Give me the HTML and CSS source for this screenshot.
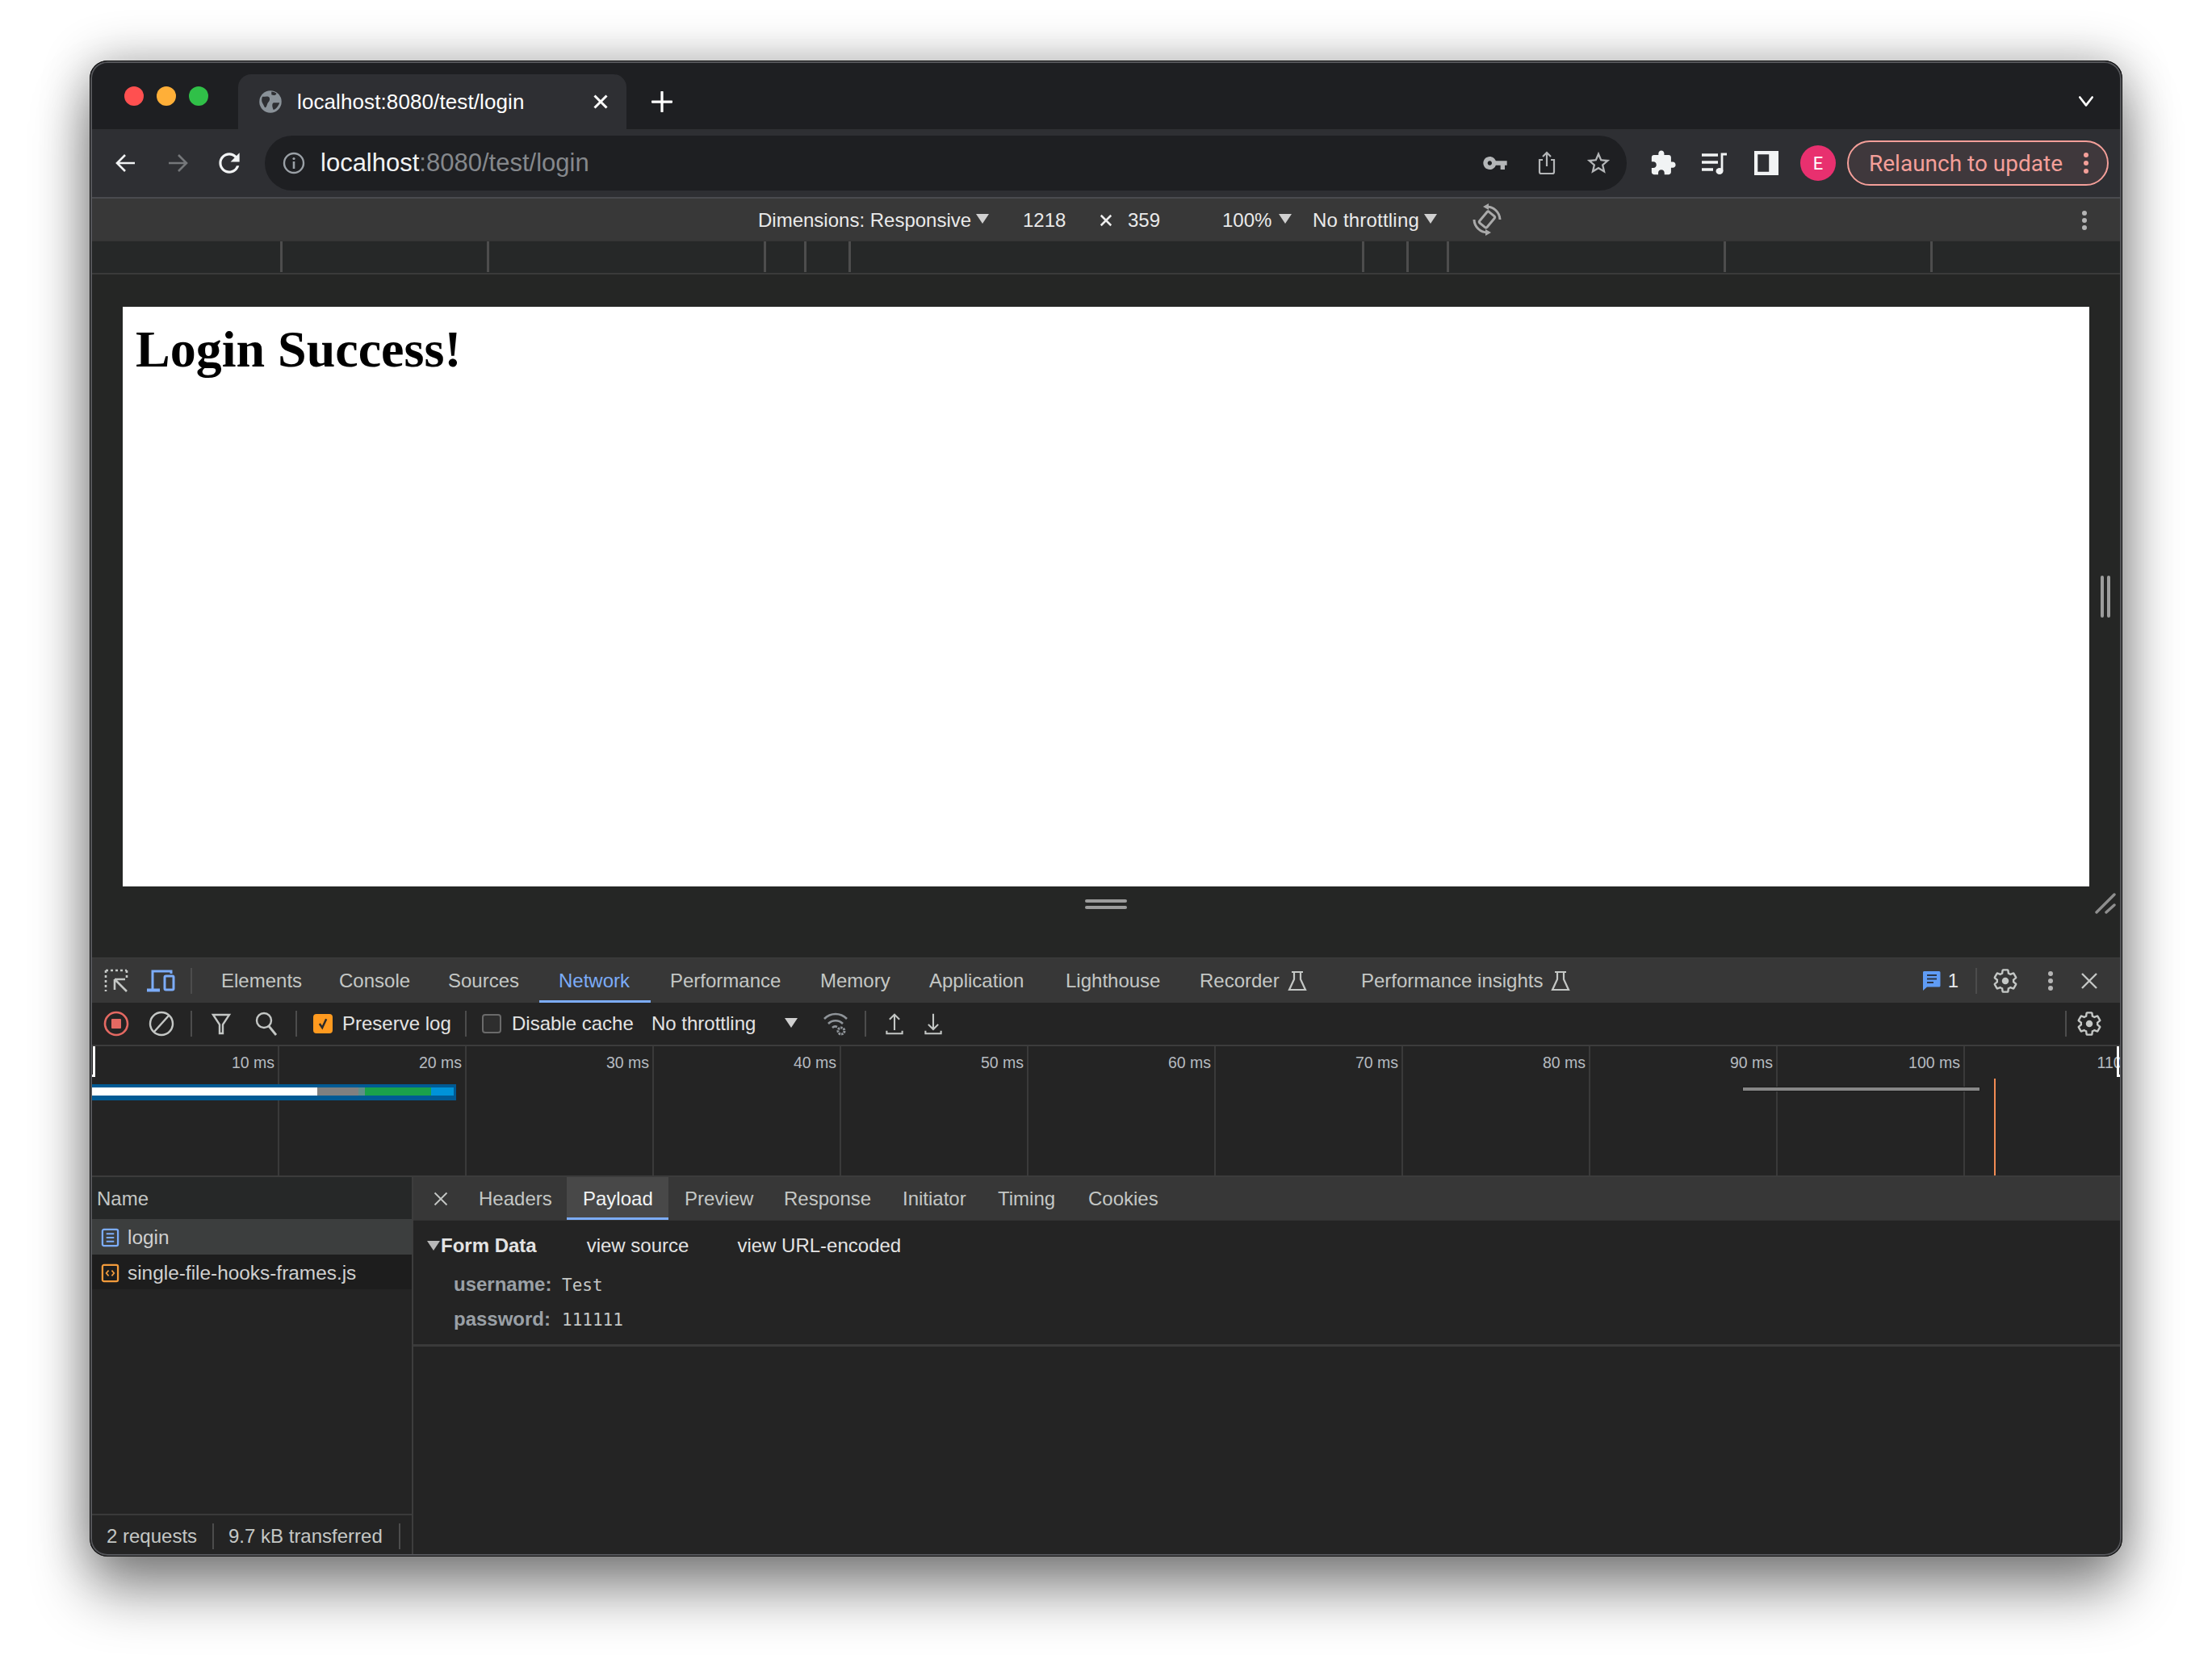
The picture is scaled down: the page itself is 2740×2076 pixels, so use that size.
FILE: index.html
```html
<!DOCTYPE html>
<html lang="en">
<head>
    <meta charset="UTF-8">
    <title>localhost:8080/test/login</title>
    <link rel="stylesheet" href="styles.css">
</head>
<body>
    <div class="window">
        <!-- Tab strip -->
        <div class="titlebar">
            <div class="lights">
                <span class="light red"></span>
                <span class="light yellow"></span>
                <span class="light green"></span>
            </div>
            <div class="tab">
                <svg class="favicon" viewBox="0 0 24 24"><circle cx="12" cy="12" r="11" fill="#8a9299"/><path fill="#2e2f33" d="M4 7c3 0 6-1 7 1 1 3-1 4-2 6-1 3-2 5-3 3-1-3-4-5-2-10zM15 13c2 0 4 0 6 0-1 3-3 6-6 7-1-2-2-6 0-7zM13 2c2 0 4 1 5 2-1 2-3 2-5 1z"/></svg>
                <span class="tab-title">localhost:8080/test/login</span>
                <svg class="tab-close" viewBox="0 0 16 16"><path d="M3 3l10 10M13 3L3 13" stroke="#fff" stroke-width="2" fill="none"/></svg>
            </div>
            <svg class="new-tab" viewBox="0 0 24 24"><path d="M12 1v22M1 12h22" stroke="#fff" stroke-width="3" fill="none" stroke-linecap="round"/></svg>
            <svg class="tab-list" viewBox="0 0 20 14"><path d="M3 2l7 9 7-9" stroke="#fff" stroke-width="2.4" fill="none" stroke-linecap="round" stroke-linejoin="round"/></svg>
        </div>

        <!-- Address bar -->
        <div class="toolbar">
            <span class="btn"><svg class="ic28" viewBox="0 0 28 28"><path d="M25 14H4M13 4L3 14l10 10" stroke="#f1f3f4" stroke-width="2.6" fill="none"/></svg></span>
            <span class="btn"><svg class="ic28" viewBox="0 0 28 28"><path d="M3 14h21M15 4l10 10-10 10" stroke="#75777a" stroke-width="2.6" fill="none"/></svg></span>
            <span class="btn"><svg class="ic38" viewBox="0 0 24 24"><path fill="#f1f3f4" d="M17.65 6.35C16.2 4.9 14.21 4 12 4c-4.42 0-7.99 3.58-7.99 8s3.57 8 7.99 8c3.73 0 6.84-2.55 7.73-6h-2.08c-.82 2.33-3.04 4-5.65 4-3.31 0-6-2.69-6-6s2.69-6 6-6c1.66 0 3.14.69 4.22 1.78L13 11h7V4l-2.35 2.35z"/></svg></span>
            <div class="omnibox">
                <svg class="info" viewBox="0 0 28 28"><circle cx="14" cy="14" r="12" stroke="#9aa0a6" stroke-width="2.4" fill="none"/><path d="M14 12v9" stroke="#9aa0a6" stroke-width="2.6"/><circle cx="14" cy="8.5" r="1.6" fill="#9aa0a6"/></svg>
                <span class="url">localhost<span class="url-rest">:8080/test/login</span></span>
                <span class="btn first"><svg class="ic32" viewBox="0 0 24 24"><path fill="#b4b6b8" d="M12.65 10C11.83 7.67 9.61 6 7 6c-3.31 0-6 2.69-6 6s2.69 6 6 6c2.61 0 4.83-1.67 5.65-4H17v4h4v-4h2v-4H12.65zM7 14c-1.1 0-2-.9-2-2s.9-2 2-2 2 .9 2 2-.9 2-2 2z"/></svg></span>
                <span class="btn"><svg class="ic32" viewBox="0 0 32 32"><path d="M11 12H7v15a2 2 0 0 0 2 2h14a2 2 0 0 0 2-2V12h-4M16 20V3M11 8l5-5 5 5" stroke="#b4b6b8" stroke-width="2.2" fill="none"/></svg></span>
                <span class="btn"><svg class="ic34" viewBox="0 0 24 24"><path fill="#b4b6b8" d="M22 9.24l-7.19-.62L12 2 9.19 8.63 2 9.24l5.46 4.73L5.82 21 12 17.27 18.18 21l-1.63-7.03L22 9.24zM12 15.4l-3.76 2.27 1-4.28-3.32-2.88 4.38-.38L12 6.1l1.71 4.04 4.38.38-3.32 2.88 1 4.28L12 15.4z"/></svg></span>
            </div>
            <span class="btn ext"><svg class="ic34" viewBox="0 0 24 24"><path fill="#f1f3f4" d="M20.5 11H19V7c0-1.1-.9-2-2-2h-4V3.5C13 2.12 11.88 1 10.5 1S8 2.12 8 3.5V5H4c-1.1 0-1.99.9-1.99 2v3.8H3.5c1.49 0 2.7 1.21 2.7 2.7s-1.21 2.7-2.7 2.7H2V20c0 1.1.9 2 2 2h3.8v-1.5c0-1.49 1.21-2.7 2.7-2.7 1.49 0 2.7 1.21 2.7 2.7V22H17c1.1 0 2-.9 2-2v-4h1.5c1.38 0 2.5-1.12 2.5-2.5S21.88 11 20.5 11z"/></svg></span>
            <span class="btn"><svg class="ic34" viewBox="0 0 34 28"><path d="M1 4h20M1 13h20M1 22h14" stroke="#f1f3f4" stroke-width="3.4"/><path d="M26 24V3h6" stroke="#f1f3f4" stroke-width="2.8" fill="none"/><ellipse cx="23" cy="24" rx="4.5" ry="4" fill="#f1f3f4"/></svg></span>
            <span class="btn"><svg class="ic30" viewBox="0 0 28 28"><path d="M0 0h28v28H0zM4 4v20h13V4z" fill="#f1f3f4" fill-rule="evenodd"/></svg></span>
            <span class="btn"><span class="avatar">E</span></span>
            <div class="relaunch">
                <span>Relaunch to update</span>
                <span class="kebab pink"><i></i><i></i><i></i></span>
            </div>
        </div>

        <!-- Device mode bar -->
        <div class="devicebar">
            <span></span>
            <span class="db-item">Dimensions: Responsive<i class="arrow"></i></span>
            <span class="db-item">1218</span>
            <span class="db-item">
                <svg class="db-x" viewBox="0 0 16 16"><path d="M3 3l10 10M13 3L3 13" stroke="#eee" stroke-width="2" fill="none"/></svg>
            </span>
            <span class="db-item">359</span>
            <span class="db-item db-pct">100%<i class="arrow"></i></span>
            <span class="db-item db-throttle">No throttling<i class="arrow"></i></span>
            <svg class="rotate" viewBox="0 0 40 40"><g fill="none" stroke="#aaa" stroke-width="3"><rect x="14" y="11" width="12" height="18" rx="2" transform="rotate(40 20 20)"/><path d="M19 4A16.500 16.500 0 0 1 36 20M21 36A16.500 16.500 0 0 1 4 20"/></g><path d="M15 4l7-4v8zM25 36l-7-4v8z" fill="#aaa"/></svg>
            <span></span>
            <span class="btn narrow"><span class="kebab grey"><i></i><i></i><i></i></span></span>
        </div>

        <!-- Media query ruler -->
        <div class="ruler">
            <i></i><i></i><i></i><i></i><i></i><i></i><i></i><i></i><i></i><i></i>
        </div>

        <!-- Emulated page -->
        <div class="device-area">
            <div class="viewport">
                <h1>Login Success!</h1>
            </div>
            <div class="side-handle"><i></i><i></i></div>
            <div class="bottom-handle"><i></i><i></i></div>
            <svg class="corner-handle" viewBox="0 0 26 26"><path d="M2 24L24 2M14 24l10-9" stroke="#8e8e8e" stroke-width="3.4" stroke-linecap="round"/></svg>
        </div>

        <!-- DevTools main tabs -->
        <div class="dt-tabs">
            <span class="cell"><svg class="ic32" viewBox="0 0 32 32"><path d="M3 3h26M3 3v24M3 3" stroke="#c4c7c5" stroke-width="2.6" stroke-dasharray="3 3" fill="none"/><path d="M29 3v9M3 27v2" stroke="#c4c7c5" stroke-width="2.6" stroke-dasharray="3 3"/><path d="M14 14h13M14 14v13M14 14l15 15" stroke="#c4c7c5" stroke-width="2.6" fill="none"/></svg></span>
            <span class="cell"><svg class="ic36" viewBox="0 0 36 32"><path d="M7 27V4h23v3" stroke="#7cacf8" stroke-width="3" fill="none"/><path d="M0 27.5h16" stroke="#7cacf8" stroke-width="4"/><rect x="22" y="10" width="11" height="17" rx="1.5" stroke="#7cacf8" stroke-width="3" fill="none"/></svg></span>
            <i class="sep"></i>
            <div class="tabs-list">
                <span class="dt-tab">Elements</span>
                <span class="dt-tab">Console</span>
                <span class="dt-tab">Sources</span>
                <span class="dt-tab active">Network</span>
                <span class="dt-tab">Performance</span>
                <span class="dt-tab">Memory</span>
                <span class="dt-tab">Application</span>
                <span class="dt-tab">Lighthouse</span>
                <span class="dt-tab">Recorder
                    <svg class="flask" viewBox="0 0 24 26"><path d="M5 2h14M8 2v9L2 24h20L16 11V2" stroke="#c4c7c5" stroke-width="2.2" fill="none"/></svg>
                </span>
                <span class="dt-tab">Performance insights
                    <svg class="flask" viewBox="0 0 24 26"><path d="M5 2h14M8 2v9L2 24h20L16 11V2" stroke="#c4c7c5" stroke-width="2.2" fill="none"/></svg>
                </span>
            </div>
            <div class="dt-right">
                <svg class="msg" viewBox="0 0 22 26"><path d="M2 1h18a1.500 1.500 0 0 1 1.500 1.500V19a1.500 1.500 0 0 1-1.500 1.500H5L0 25V2.500A1.500 1.500 0 0 1 2 1z" fill="#5f9cf5"/><path d="M5 6h12M5 10.500h12M5 15h8" stroke="#2c3646" stroke-width="2"/></svg>
                <span class="count">1</span>
                <i class="sep gear-sep"></i>
                <span class="cell small gear-cell"><svg class="gear" viewBox="0 0 24 24"><path fill="none" stroke="#c4c7c5" stroke-width="1.700" d="M19.14 12.94c.04-.3.06-.61.06-.94 0-.32-.02-.64-.07-.94l2.03-1.58a.49.49 0 0 0 .12-.61l-1.92-3.32a.488.488 0 0 0-.59-.22l-2.39.96c-.5-.38-1.03-.7-1.62-.94l-.36-2.54a.484.484 0 0 0-.48-.41h-3.84c-.24 0-.43.17-.47.41l-.36 2.54c-.59.24-1.13.57-1.62.94l-2.39-.96c-.22-.08-.47 0-.59.22L2.74 8.87c-.12.21-.08.47.12.61l2.03 1.58c-.05.3-.09.63-.09.94s.02.64.07.94l-2.03 1.58a.49.49 0 0 0-.12.61l1.92 3.32c.12.22.37.29.59.22l2.39-.96c.5.38 1.03.7 1.62.94l.36 2.54c.05.24.24.41.48.41h3.84c.24 0 .44-.17.47-.41l.36-2.54c.59-.24 1.13-.56 1.62-.94l2.39.96c.22.08.47 0 .59-.22l1.92-3.32c.12-.22.07-.47-.12-.61l-2.01-1.58z"/><circle cx="12" cy="12" r="3" fill="#c4c7c5"/></svg></span>
                <span class="cell small"><span class="kebab grey"><i></i><i></i><i></i></span></span>
                <span class="cell small"><svg class="ic24" viewBox="0 0 24 24"><path d="M3 3l18 18M21 3L3 21" stroke="#c4c7c5" stroke-width="2.400" fill="none"/></svg></span>
            </div>
        </div>

        <!-- Network toolbar -->
        <div class="net-toolbar">
            <span class="cell"><svg class="ic32" viewBox="0 0 32 32"><circle cx="16" cy="16" r="14" stroke="#e46962" stroke-width="2.600" fill="none"/><rect x="10" y="10" width="12" height="12" rx="1" fill="#e46962"/></svg></span>
            <span class="cell"><svg class="ic32" viewBox="0 0 32 32"><circle cx="16" cy="16" r="14" stroke="#c4c7c5" stroke-width="2.400" fill="none"/><path d="M7 26L25 6" stroke="#c4c7c5" stroke-width="2.400"/></svg></span>
            <i class="sep"></i>
            <span class="cell with-sep"><svg class="ic28" viewBox="0 0 28 28"><path d="M4 3h20l-8 12v11h-4V15z" stroke="#c4c7c5" stroke-width="2.400" fill="none"/></svg></span>
            <span class="cell"><svg class="ic30" viewBox="0 0 30 30"><circle cx="12" cy="11" r="9" stroke="#c4c7c5" stroke-width="2.400" fill="none"/><path d="M18 18l9 11" stroke="#c4c7c5" stroke-width="2.800"/></svg></span>
            <i class="sep"></i>
            <span class="check on"><svg viewBox="0 0 24 24"><path d="M7 12l4 6 6-13" stroke="#2b2b2b" stroke-width="3" fill="none"/></svg></span>
            <span class="net-label preserve">Preserve log</span>
            <i class="sep after-label"></i>
            <span class="check"></span>
            <span class="net-label disable">Disable cache</span>
            <span class="net-label throttle">No throttling</span>
            <i class="arrow net-arrow"></i>
            <span class="cell wifi"><svg class="ic34" viewBox="0 0 34 34"><g fill="none" stroke="#8f9499" stroke-width="2.600"><path d="M3 11c8-8 20-8 28 0M8 17c5-5 13-5 18 0M13 22c2-2 4-2 6-1"/></g><circle cx="24" cy="26" r="4" fill="none" stroke="#8f9499" stroke-width="3" stroke-dasharray="2.500 1"/></svg></span>
            <i class="sep"></i>
            <span class="cell small up"><svg class="ic28" viewBox="0 0 28 32"><path d="M14 25V3M7 10l7-7 7 7M3 26v4h22v-4" stroke="#c4c7c5" stroke-width="2.400" fill="none"/></svg></span>
            <span class="cell small"><svg class="ic28" viewBox="0 0 28 32"><path d="M14 2v22M7 17l7 7 7-7M3 26v4h22v-4" stroke="#c4c7c5" stroke-width="2.400" fill="none"/></svg></span>
            <i class="sep net-right"></i>
            <span class="cell"><svg class="gear" viewBox="0 0 24 24"><path fill="none" stroke="#c4c7c5" stroke-width="1.700" d="M19.14 12.94c.04-.3.06-.61.06-.94 0-.32-.02-.64-.07-.94l2.03-1.58a.49.49 0 0 0 .12-.61l-1.92-3.32a.488.488 0 0 0-.59-.22l-2.39.96c-.5-.38-1.03-.7-1.62-.94l-.36-2.54a.484.484 0 0 0-.48-.41h-3.84c-.24 0-.43.17-.47.41l-.36 2.54c-.59.24-1.13.57-1.62.94l-2.39-.96c-.22-.08-.47 0-.59.22L2.74 8.87c-.12.21-.08.47.12.61l2.03 1.58c-.05.3-.09.63-.09.94s.02.64.07.94l-2.03 1.58a.49.49 0 0 0-.12.61l1.92 3.32c.12.22.37.29.59.22l2.39-.96c.5.38 1.03.7 1.62.94l.36 2.54c.05.24.24.41.48.41h3.84c.24 0 .44-.17.47-.41l.36-2.54c.59-.24 1.13-.56 1.62-.94l2.39.96c.22.08.47 0 .59-.22l1.92-3.32c.12-.22.07-.47-.12-.61l-2.01-1.58z"/><circle cx="12" cy="12" r="3" fill="#c4c7c5"/></svg></span>
        </div>

        <!-- Overview timeline -->
        <div class="overview">
            <div class="ov-cell">10 ms</div>
            <div class="ov-cell">20 ms</div>
            <div class="ov-cell">30 ms</div>
            <div class="ov-cell">40 ms</div>
            <div class="ov-cell">50 ms</div>
            <div class="ov-cell">60 ms</div>
            <div class="ov-cell">70 ms</div>
            <div class="ov-cell">80 ms</div>
            <div class="ov-cell">90 ms</div>
            <div class="ov-cell">100 ms</div>
            <div class="ov-cell">110 ms</div>

            <div class="ov-bar">
                <i class="seg-white"></i><i class="seg-grey"></i><i class="seg-teal"></i><i class="seg-green"></i><i class="seg-blue"></i>
            </div>
            <div class="ov-bar2"></div>
            <div class="ov-load"></div>
            <div class="ov-grip left"></div>
            <div class="ov-grip right"></div>
        </div>

        <!-- Requests and details -->
        <div class="panel">
            <div class="requests">
                <div class="req-head">Name</div>
                <div class="req-row selected">
                    <svg class="req-ic" viewBox="0 0 24 24"><rect x="2" y="1.500" width="20" height="21" rx="2" stroke="#7cacf8" stroke-width="2.400" fill="none"/><path d="M7 7h10M7 12h10M7 17h10" stroke="#7cacf8" stroke-width="2.200"/></svg>
                    login
                </div>
                <div class="req-row alt">
                    <svg class="req-ic" viewBox="0 0 24 24"><rect x="2" y="1.500" width="20" height="21" rx="2" stroke="#f29b3c" stroke-width="2.400" fill="none"/><path d="M10 8.500L7 12l3 3.500M14 8.500l3 3.500-3 3.500" stroke="#f29b3c" stroke-width="1.800" fill="none"/></svg>
                    single-file-hooks-frames.js
                </div>
                <div class="req-fill"></div>
                <div class="statusbar">
                    <span class="status first">2 requests</span>
                    <span class="status">9.7 kB transferred</span>
                </div>
            </div>
            <div class="details">
                <div class="det-tabs">
                    <svg class="det-close" viewBox="0 0 24 24"><path d="M3 3l18 18M21 3L3 21" stroke="#c4c7c5" stroke-width="2.200" fill="none"/></svg>
                    <div class="det-list">
                        <span class="det-tab">Headers</span>
                        <span class="det-tab active">Payload</span>
                        <span class="det-tab">Preview</span>
                        <span class="det-tab">Response</span>
                        <span class="det-tab">Initiator</span>
                        <span class="det-tab">Timing</span>
                        <span class="det-tab">Cookies</span>
                    </div>
                </div>
                <div class="form-data">
                    <div class="fd-head">
                        <i class="arrow fd-arrow"></i>
                        <strong>Form Data</strong>
                        <span class="fd-link first">view source</span>
                        <span class="fd-link">view URL-encoded</span>
                    </div>
                    <div class="fd-row"><b>username:</b><code>Test</code></div>
                    <div class="fd-row"><b>password:</b><code>111111</code></div>
                </div>
            </div>
        </div>

        <div class="window-edge"></div>
    </div>
</body>
</html>
```

FILE: styles.css
```css
* {
    margin: 0;
    padding: 0;
    box-sizing: border-box;
}

body {
    width: 2740px;
    height: 2076px;
    padding: 75px 111px 0;
    background: #fff;
    font-family: "Liberation Sans", Arial, sans-serif;
    overflow: hidden;
}

i {
    display: block;
    font-style: normal;
}

svg {
    display: block;
    flex: none;
}

/* Window frame */
.window {
    position: relative;
    width: 2518px;
    height: 1853px;
    display: flex;
    flex-direction: column;
    padding: 0 1px;
    background: #252525;
    border-radius: 22px;
    overflow: hidden;
    box-shadow: 0 44px 70px rgba(0, 0, 0, 0.42), 0 0 60px rgba(0, 0, 0, 0.3);
}

.window-edge {
    position: absolute;
    inset: 0;
    border-radius: 22px;
    border: 1px solid #0c0c0c;
    box-shadow: inset 0 0 0 2px #55565a;
    pointer-events: none;
}

/* Tab strip */
.titlebar {
    height: 85px;
    flex: none;
    display: flex;
    align-items: flex-end;
    background: #1e1f22;
    position: relative;
}

.lights {
    width: 183px;
    display: flex;
    gap: 16px;
    padding: 0 0 29px 42px;
}

.light {
    width: 24px;
    height: 24px;
    border-radius: 50%;
}

.red { background: #ff5050; }
.yellow { background: #ffaf38; }
.green { background: #30c048; }

.tab {
    width: 481px;
    height: 68px;
    display: flex;
    align-items: center;
    background: #2e2f33;
    border-radius: 16px 16px 0 0;
    padding-left: 25px;
    color: #fff;
}

.favicon {
    width: 30px;
    height: 30px;
    margin-right: 2px;
}

.tab-title {
    margin-left: 16px;
    width: 364px;
    font-size: 26px;
    letter-spacing: 0.1px;
}

.tab-close {
    width: 24px;
    height: 24px;
}

.new-tab {
    width: 26px;
    height: 26px;
    margin: 0 0 21px 31px;
}

.tab-list {
    width: 22px;
    height: 16px;
    margin: 0 33px 26px auto;
}

/* Address bar */
.toolbar {
    height: 86px;
    flex: none;
    display: flex;
    align-items: center;
    padding: 0 16px 0 12px;
    background: #2e2f33;
    border-bottom: 2px solid #4a4b4f;
}

.btn {
    width: 64px;
    height: 64px;
    flex: none;
    display: flex;
    align-items: center;
    justify-content: center;
}

.btn.first { margin-left: auto; }
.btn.ext { margin-left: 13px; }
.btn.narrow { width: 64px; height: 50px; }

.ic24 { width: 24px; height: 24px; }
.ic28 { width: 28px; height: 28px; }
.ic30 { width: 30px; height: 30px; }
.ic32 { width: 32px; height: 32px; }
.ic34 { width: 34px; height: 34px; }
.ic36 { width: 36px; height: 32px; }
.ic38 { width: 38px; height: 38px; }

.omnibox {
    width: 1687px;
    height: 68px;
    margin-left: 12px;
    flex: none;
    display: flex;
    align-items: center;
    padding: 0 3px 0 20px;
    background: #1e1f22;
    border-radius: 34px;
}

.info {
    width: 28px;
    height: 28px;
    margin-left: 2px;
}

.url {
    margin-left: 19px;
    font-size: 31px;
    color: #f1f3f4;
}

.url-rest {
    color: #85888c;
}

.avatar {
    width: 44px;
    height: 44px;
    border-radius: 50%;
    background: #e8306f;
    color: #fff;
    font-size: 22px;
    display: flex;
    align-items: center;
    justify-content: center;
    font-family: Roboto, sans-serif;
}

.relaunch {
    width: 324px;
    height: 56px;
    margin-left: 4px;
    flex: none;
    display: flex;
    align-items: center;
    padding-left: 25px;
    border: 2px solid #f49f99;
    border-radius: 28px;
    background: #3f383c;
    color: #f49f99;
    font-size: 28px;
    font-family: Roboto, sans-serif;
}

.kebab {
    display: flex;
    flex-direction: column;
    gap: 3px;
}

.kebab i {
    width: 6px;
    height: 6px;
    border-radius: 50%;
    background: #b4b4b4;
}

.kebab.pink {
    margin-left: auto;
    margin-right: 23px;
    gap: 4px;
}

.kebab.pink i {
    background: #f49f99;
}

/* Device mode bar */
.devicebar {
    height: 53px;
    flex: none;
    display: grid;
    grid-template-columns: 827px 328px 92px 38px 117px 112px 196px 40px 1fr 64px;
    align-items: center;
    padding: 1px 14px 0 0;
    background: #383838;
    border-bottom: 1px solid #333;
    color: #eaeaea;
    font-size: 24px;
}

.db-item {
    display: flex;
    align-items: center;
}

.db-x {
    width: 20px;
    height: 20px;
    margin-left: 1px;
}

.arrow {
    width: 0;
    height: 0;
    margin: 0 0 4px 6px;
    border-left: 8px solid transparent;
    border-right: 8px solid transparent;
    border-top: 12px solid #d0d0d0;
}

.db-pct .arrow { margin-left: 9px; }
.db-throttle { letter-spacing: 0.2px; }

.rotate {
    width: 40px;
    height: 40px;
    margin-top: -2px;
}

/* Media query ruler */
.ruler {
    height: 41px;
    flex: none;
    display: grid;
    grid-template-columns: 238px 256px 343px 50px 55px 636px 55px 50px 343px 256px;
    background: #262828;
    border-bottom: 2px solid #3a3a3a;
    padding-bottom: 1px;
}

.ruler i {
    border-right: 3px solid #4d4d4d;
}

/* Emulated page */
.device-area {
    height: 846px;
    flex: none;
    display: grid;
    grid-template-columns: 40px 2436px 1fr;
    grid-template-rows: 40px 718px 1fr;
    background: #252625;
}

.viewport {
    grid-column: 2;
    grid-row: 2;
    padding: 16px;
    background: #fff;
}

.viewport h1 {
    font-family: "Liberation Serif", "Times New Roman", serif;
    font-size: 64px;
    font-weight: bold;
    color: #000;
}

.side-handle {
    grid-column: 3;
    grid-row: 2;
    display: flex;
    justify-content: center;
    align-items: center;
    gap: 4px;
}

.side-handle i {
    width: 4px;
    height: 52px;
    border-radius: 2px;
    background: #9c9c9c;
}

.bottom-handle {
    grid-column: 2;
    grid-row: 3;
    display: flex;
    flex-direction: column;
    align-items: center;
    gap: 4px;
    margin-top: 16px;
}

.bottom-handle i {
    width: 52px;
    height: 4px;
    border-radius: 2px;
    background: #9c9c9c;
}

.corner-handle {
    grid-column: 3;
    grid-row: 3;
    width: 26px;
    height: 26px;
    margin: 8px 0 0 7px;
}

/* DevTools main tabs */
.dt-tabs {
    height: 56px;
    flex: none;
    display: flex;
    align-items: center;
    padding-left: 4px;
    background: #373737;
    border-top: 1px solid #3e3e3e;
}

.cell {
    width: 56px;
    height: 50px;
    flex: none;
    display: flex;
    align-items: center;
    justify-content: center;
}

.cell.small { width: 48px; }
.cell.gear-cell { margin-right: 8px; }

.sep {
    width: 2px;
    height: 32px;
    flex: none;
    margin-left: 8px;
    background: #4c4c4c;
}

.tabs-list {
    display: grid;
    grid-template-columns: 146px 135px 137px 138px 186px 135px 169px 166px 200px 306px;
    height: 100%;
    margin-left: 12px;
}

.dt-tab {
    display: flex;
    align-items: center;
    padding-left: 24px;
    font-size: 24px;
    color: #c4c7c5;
    white-space: nowrap;
}

.dt-tab.active {
    color: #7cacf8;
    box-shadow: inset 0 -3px 0 #7cacf8;
}

.flask {
    width: 24px;
    height: 26px;
    margin-left: 10px;
}

.dt-right {
    margin-left: auto;
    display: flex;
    align-items: center;
    padding-right: 16px;
}

.msg {
    width: 22px;
    height: 26px;
}

.count {
    margin-left: 9px;
    font-size: 24px;
    color: #e8eaed;
}

.gear-sep { margin: 0 11px 0 21px; }

.gear {
    width: 34px;
    height: 34px;
}

/* Network toolbar */
.net-toolbar {
    height: 54px;
    flex: none;
    display: flex;
    align-items: center;
    padding: 0 12px 0 4px;
    background: #242424;
    border-bottom: 2px solid #3c3c3c;
}

.cell.with-sep { margin-left: 8px; }

.check {
    width: 24px;
    height: 24px;
    flex: none;
    margin-left: 19px;
    border: 2px solid #6a6a6a;
    border-radius: 4px;
    background: #2e2e2e;
}

.check svg {
    width: 20px;
    height: 20px;
}

.check.on {
    margin-left: 20px;
    background: #ff9a1f;
    border-color: #ff9a1f;
}

.net-label {
    font-size: 24px;
    color: #e3e3e3;
    flex: none;
    white-space: nowrap;
}

.preserve { margin-left: 12px; width: 132px; }
.sep.after-label { margin-left: 20px; }
.disable { margin-left: 13px; width: 150px; }
.throttle { margin-left: 23px; width: 131px; }

.arrow.net-arrow {
    margin: 0 0 2px 34px;
}

.cell.wifi { margin-left: 19px; }
.cell.up { margin-left: 11px; }

.sep.net-right {
    margin-left: auto;
}

/* Overview timeline */
.overview {
    height: 162px;
    flex: none;
    position: relative;
    display: flex;
    overflow: hidden;
    padding-left: 2px;
    background: #242424;
    border-bottom: 2px solid #3c3c3c;
}

.ov-cell {
    width: 232px;
    flex: none;
    padding: 9px 4px 0 0;
    border-right: 2px solid #3a3a3a;
    text-align: right;
    font-size: 19.500px;
    color: #b6bbc0;
    white-space: nowrap;
}

.ov-bar {
    position: absolute;
    left: 0;
    top: 47px;
    width: 453px;
    height: 20px;
    display: flex;
    padding: 4px 3px 6px 0;
    background: #005a94;
}

.ov-bar i { height: 10px; }
.seg-white { width: 281px; background: #fff; }
.seg-grey { width: 51px; background: #808080; }
.seg-teal { width: 8px; background: #5f8f8a; }
.seg-green { width: 82px; background: #1aa14b; }
.seg-blue { width: 28px; background: #0093d8; }

.ov-bar2 {
    position: absolute;
    left: 2046px;
    top: 50px;
    width: 295px;
    height: 6px;
    background: #878787;
    border: 1px solid #1d1d1d;
}

.ov-load {
    position: absolute;
    left: 2358px;
    top: 40px;
    bottom: 0;
    width: 2px;
    background: #f28b54;
}

.ov-grip {
    position: absolute;
    top: 0;
    width: 6px;
    height: 38px;
    border-bottom: 3px solid #fff;
}

.ov-grip.left { left: 0; border-right: 3px solid #fff; }
.ov-grip.right { right: 0; border-left: 3px solid #fff; }

/* Requests and details */
.panel {
    flex: 1;
    min-height: 0;
    display: flex;
}

.requests {
    width: 400px;
    flex: none;
    display: flex;
    flex-direction: column;
    border-right: 2px solid #3d3d3d;
    background: #242424;
    color: #d0d0d0;
    font-size: 24.400px;
}

.req-head {
    height: 52px;
    line-height: 54px;
    padding-left: 8px;
    background: #262828;
    color: #c4c7c5;
    font-size: 24px;
}

.req-row {
    display: flex;
    align-items: center;
    gap: 10px;
    padding: 2px 0 0 13px;
    height: 43px;
}

.req-row.selected {
    height: 44px;
    background: #3c3e3e;
}

.req-row.alt {
    background: #1d1d1d;
}

.req-ic {
    width: 23px;
    height: 24px;
}

.req-fill {
    flex: 1;
}

.statusbar {
    height: 53px;
    display: flex;
    align-items: center;
    border-top: 2px solid #3a3a3a;
    font-size: 24px;
}

.status {
    padding: 0 20px;
    height: 32px;
    line-height: 32px;
    border-right: 2px solid #4c4c4c;
    color: #c4c7c5;
    white-space: nowrap;
}

.status.first {
    width: 153px;
}

.status:last-child {
    padding-right: 20px;
    padding-left: 18px;
}

.details {
    flex: 1;
    min-width: 0;
    background: #242424;
}

.det-tabs {
    height: 54px;
    display: flex;
    background: #373737;
    border-bottom: 1px solid #333;
    font-size: 24px;
    color: #c4c7c5;
    align-items: stretch;
}

.det-close {
    width: 20px;
    height: 20px;
    margin: 17px 17px 0 24px;
}

.det-list {
    display: grid;
    grid-template-columns: 129px 126px 123px 147px 118px 112px 140px;
}

.det-tab {
    display: flex;
    align-items: center;
    padding-left: 20px;
    white-space: nowrap;
}

.det-tab.active {
    background: #484848;
    color: #f1f3f4;
    box-shadow: inset 0 -3px 0 #7cacf8;
}

.form-data {
    height: 156px;
    padding-top: 17px;
    border-bottom: 3px solid #3a3a3a;
}

.fd-head {
    display: flex;
    align-items: center;
    height: 28px;
    padding-left: 18px;
    font-size: 24px;
    color: #e3e3e3;
}

.arrow.fd-arrow {
    margin: 0 1px 0 -1px;
    border-top-color: #b8b8b8;
}

.fd-head strong {
    color: #e3e3e3;
}

.fd-link {
    margin-left: 60px;
    color: #e3e3e3;
}

.fd-link.first {
    margin-left: 62px;
}

.fd-row {
    display: flex;
    align-items: baseline;
    height: 43px;
    padding-left: 50px;
}

.fd-head + .fd-row {
    margin-top: 20px;
}

.fd-row b {
    width: 134px;
    font-size: 24px;
    color: #9aa0a6;
}

.fd-row code {
    font-family: "DejaVu Sans Mono", "Liberation Mono", monospace;
    font-size: 21px;
    color: #c4c7c5;
}
```
